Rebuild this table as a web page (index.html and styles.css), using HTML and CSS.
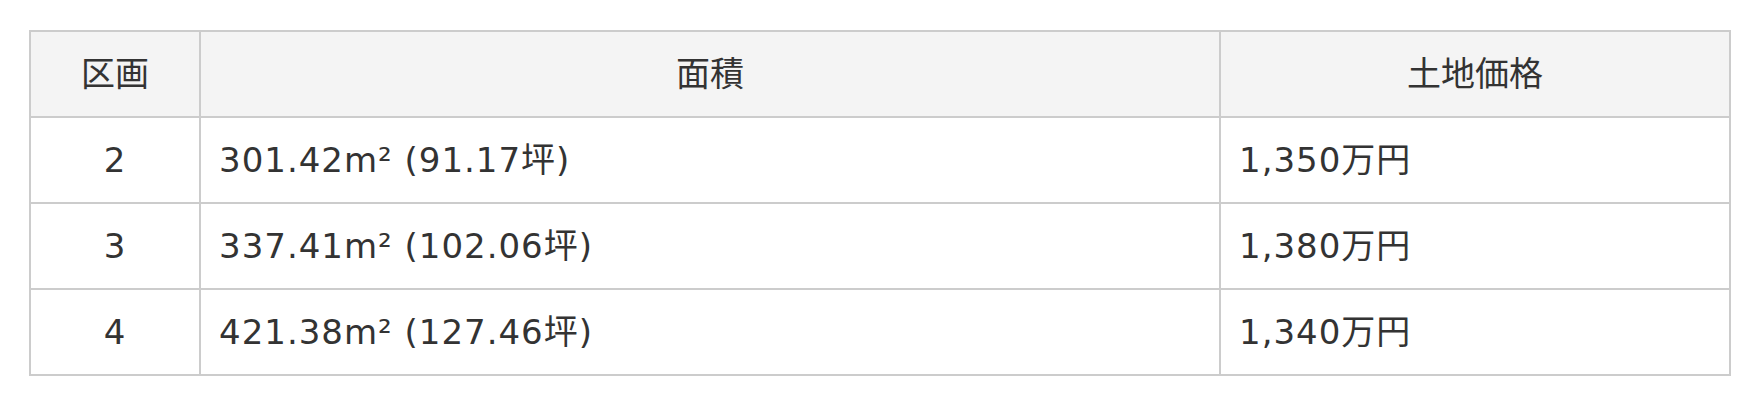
FILE: index.html
```html
<!DOCTYPE html>
<html lang="ja">
<head>
<meta charset="utf-8">
<title>区画一覧</title>
<link rel="stylesheet" href="styles.css">
</head>
<body>
<div class="wrap">
  <table class="lots">
    <colgroup>
      <col class="c-no">
      <col class="c-area">
      <col class="c-price">
    </colgroup>
    <thead>
      <tr>
        <th>区画</th>
        <th>面積</th>
        <th>土地価格</th>
      </tr>
    </thead>
    <tbody>
      <tr>
        <td class="num">2</td>
        <td>301.42m² (91.17坪)</td>
        <td>1,350万円</td>
      </tr>
      <tr>
        <td class="num">3</td>
        <td>337.41m² (102.06坪)</td>
        <td>1,380万円</td>
      </tr>
      <tr>
        <td class="num">4</td>
        <td>421.38m² (127.46坪)</td>
        <td>1,340万円</td>
      </tr>
    </tbody>
  </table>
</div>
</body>
</html>
```

FILE: styles.css
```css
html, body {
  margin: 0;
  padding: 0;
  background: #ffffff;
}

.wrap {
  padding: 30px 28px 0 29px;
}

.lots {
  width: 100%;
  border-collapse: separate;
  border-spacing: 0;
  table-layout: fixed;
  border-top: 2px solid #cccccc;
  border-left: 2px solid #cccccc;
  font-family: "DejaVu Sans", "Noto Sans CJK JP", sans-serif;
  font-size: 34px;
  color: #333333;
}

.c-no { width: 10%; }
.c-area { width: 60%; }
.c-price { width: 30%; }

.lots th,
.lots td {
  border-right: 2px solid #cccccc;
  border-bottom: 2px solid #cccccc;
  padding: 16px 18px;
  line-height: 52px;
  font-weight: normal;
  text-align: left;
  white-space: nowrap;
}

.lots td {
  letter-spacing: 1px;
}

.lots th {
  background: #f4f4f4;
  text-align: center;
}

.lots td.num {
  text-align: center;
}
```
